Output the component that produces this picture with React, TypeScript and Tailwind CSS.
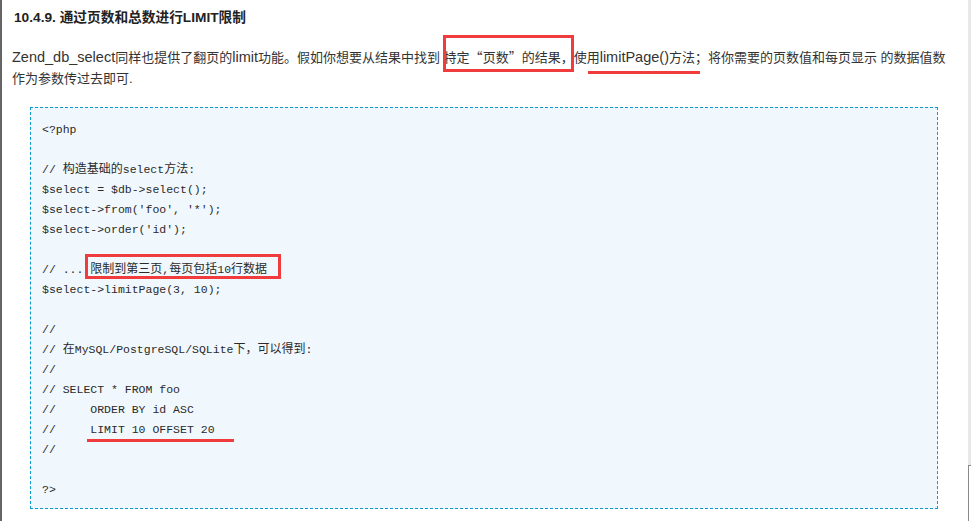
import React from 'react';

const cjkFont = { fontFamily: '"Noto Sans CJK SC", sans-serif' };

function Cn({ children, size = 'text-[12px]' }: { children: React.ReactNode; size?: string }) {
  return <span className={size}>{children}</span>;
}

function En({ children }: { children: React.ReactNode }) {
  return <span className="text-[14.5px]">{children}</span>;
}

const lines: React.ReactNode[] = [
  '<?php',
  '',
  <>// <Cn>构造基础的</Cn>select<Cn>方法</Cn>:</>,
  "$select = $db->select();",
  "$select->from('foo', '*');",
  "$select->order('id');",
  '',
  <>// ... <Cn size="text-[12px]">限制到第三页</Cn>,<Cn size="text-[12px]">每页包括</Cn>10<Cn size="text-[12px]">行数据</Cn></>,
  '$select->limitPage(3, 10);',
  '',
  '//',
  <>// <Cn>在</Cn>MySQL/PostgreSQL/SQLite<Cn>下，可以得到</Cn>:</>,
  '//',
  '// SELECT * FROM foo',
  '//     ORDER BY id ASC',
  '//     LIMIT 10 OFFSET 20',
  '//',
  '',
  '?>',
];

export default function App() {
  return (
    <div
      className="relative w-[971px] h-[521px] overflow-hidden bg-white flex border-l-2 border-[#666] text-[#333]"
      style={{ fontFamily: '"Liberation Sans", "Noto Sans CJK SC", sans-serif' }}
    >
      <div className="flex-1 flex flex-col pl-[10px]">
        <h3 className="mt-[8px] ml-[2px] text-[13.7px] leading-[20px] font-bold text-[#222]">
          10.4.9. 通过页数和总数进行LIMIT限制
        </h3>

        <p className="mt-[18px] text-[13px] leading-[21px]">
          <span className="whitespace-nowrap">
            <En>Zend_db_select</En>同样也提供了翻页的<En>limit</En>功能。假如你想要从结果中找到 特定
            <span style={cjkFont}>“</span>页数<span style={cjkFont}>”</span>的结果，使用<En>limitPage()</En>
            方法；将你需要的页数值和每页显示 的数据值数
          </span>
          <br />
          作为参数传过去即可.
        </p>

        <div className="mt-[18px] ml-[18px] mr-[30px] h-[402px] border border-dashed border-[#0a9acb] bg-[#f1f8fd] px-[11px] pt-[12px]">
          <pre
            className="text-[11.5px] leading-[20px] text-[#2a2a2a]"
            style={{ fontFamily: '"Liberation Mono", "Noto Sans CJK SC", monospace' }}
          >
            {lines.map((l, i) => (
              <div key={i} className="h-[20px] whitespace-pre">
                {l}
              </div>
            ))}
          </pre>
        </div>
      </div>

      <div className="w-[3px] flex flex-col">
        <div className="h-[465px] bg-[#e8e8e8]" />
        <div className="flex-1 border-l border-t border-[#8a8a8a] bg-white" />
      </div>

      {/* hand-drawn annotations */}
      <div className="absolute left-[441px] top-[35px] w-[131px] h-[37px] border-[3px] border-[#f03c3c]" />
      <div className="absolute left-[586px] top-[71px] w-[112px] h-[3px] bg-[#f03c3c]" />
      <div className="absolute left-[83px] top-[254px] w-[196px] h-[25px] border-[3px] border-[#f03c3c]" />
      <div className="absolute left-[85px] top-[439px] w-[147px] h-[3px] bg-[#f03c3c]" />
    </div>
  );
}
